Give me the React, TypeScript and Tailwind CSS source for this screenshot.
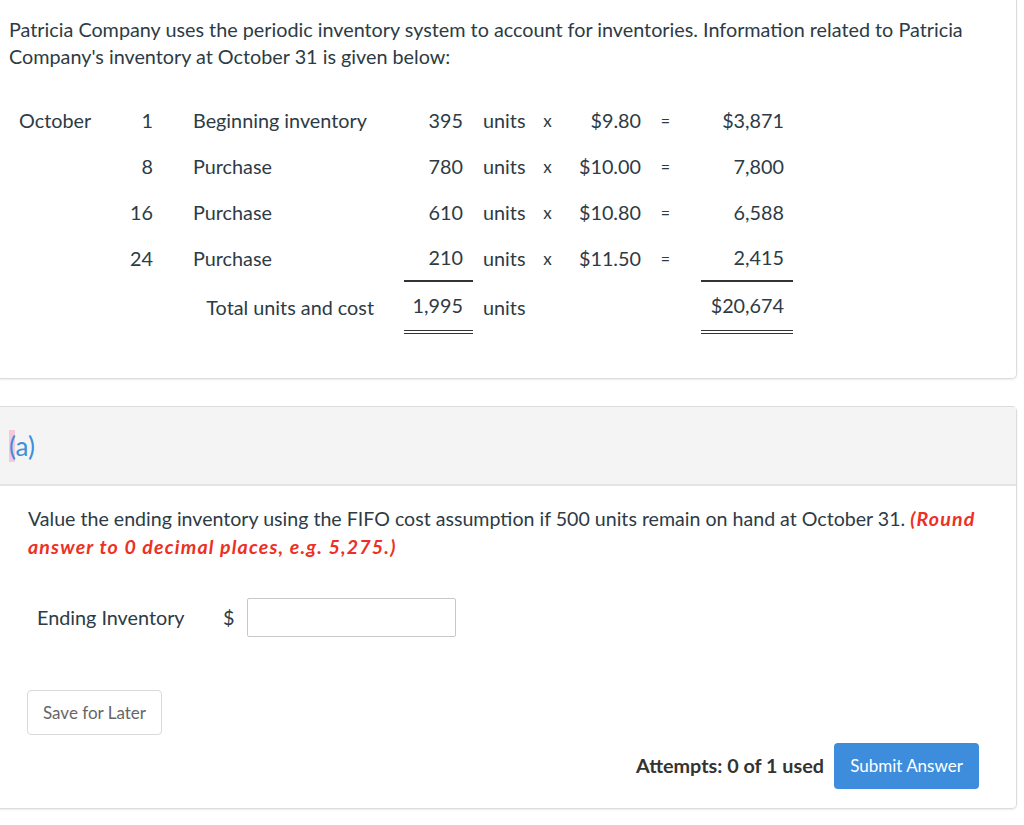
import React from "react";

type Row = {
  month?: string;
  day: string;
  desc: string;
  qty: string;
  price: string;
  amount: string;
  underline?: boolean;
};

const rows: Row[] = [
  { month: "October", day: "1", desc: "Beginning inventory", qty: "395", price: "$9.80", amount: "$3,871" },
  { day: "8", desc: "Purchase", qty: "780", price: "$10.00", amount: "7,800" },
  { day: "16", desc: "Purchase", qty: "610", price: "$10.80", amount: "6,588" },
  { day: "24", desc: "Purchase", qty: "210", price: "$11.50", amount: "2,415", underline: true },
];

const InventoryTable = () => (
  <div className="flex flex-col mt-[28px] text-[19.8px] text-[#2d3b45]">
    {rows.map((r) => (
      <div key={r.day} className="flex h-[46px]">
        <div className="w-[101px] pl-[10px] flex items-center">{r.month}</div>
        <div className="w-[53px] pr-[10px] flex items-center justify-end">{r.day}</div>
        <div className="w-[241px] pl-[30px] flex items-center">{r.desc}</div>
        <div
          className={
            "w-[69px] pr-[10px] flex items-center justify-end " +
            (r.underline ? "border-b-2 border-[#333]" : "")
          }
        >
          {r.qty}
        </div>
        <div className="w-[57px] pl-[10px] flex items-center">units</div>
        <div className="w-[35px] flex items-center justify-center text-[17px]">x</div>
        <div className="w-[86px] pr-[10px] flex items-center justify-end">{r.price}</div>
        <div className="w-[29px] flex items-center justify-center text-[16px]">=</div>
        <div className="w-[21px]" />
        <div
          className={
            "w-[92px] pr-[9px] flex items-center justify-end " +
            (r.underline ? "border-b-2 border-[#333]" : "")
          }
        >
          {r.amount}
        </div>
      </div>
    ))}
    <div className="flex h-[52px]">
      <div className="w-[395px] pr-[30px] flex items-center justify-end">Total units and cost</div>
      <div className="w-[69px] pr-[10px] flex items-center justify-end border-b-[4px] border-double border-[#333]">
        1,995
      </div>
      <div className="w-[57px] pl-[10px] flex items-center">units</div>
      <div className="w-[171px]" />
      <div className="w-[92px] pr-[9px] flex items-center justify-end border-b-[4px] border-double border-[#333]">
        $20,674
      </div>
    </div>
  </div>
);

export default function App() {
  return (
    <div className="w-[1024px] h-[825px] bg-white overflow-hidden font-['Lato','Liberation_Sans',sans-serif] text-[#2d3b45]">
      <div className="w-[1017px] h-[379px] border-r border-b border-[#dcdcdc] rounded-br-[5px] shadow-[0_1px_2px_rgba(0,0,0,0.08)] pt-[16px] pl-[9px]">
        <p className="text-[19.8px] leading-[27px] whitespace-nowrap">
          Patricia Company uses the periodic inventory system to account for inventories. Information related to
          Patricia
          <br />
          Company's inventory at October 31 is given below:
        </p>
        <InventoryTable />
      </div>

      <div className="mt-[27px] w-[1017px] h-[403px] border-t border-r border-b border-[#dcdcdc] rounded-tr-[5px] rounded-br-[5px] shadow-[0_1px_2px_rgba(0,0,0,0.08)] flex flex-col">
        <div className="h-[79px] bg-[#f4f4f4] border-b-2 border-[#e3e3e3] pl-[9px] flex items-center">
          <span className="text-[26px] text-[#3d8fdb] leading-none">
            <span className="bg-[#f6c8dc]">(</span>a)
          </span>
        </div>
        <div className="pl-[28px] pr-[37px] pt-[19px]">
          <p className="text-[19.6px] leading-[28px] whitespace-nowrap">
            Value the ending inventory using the FIFO cost assumption if 500 units remain on hand at October 31.{" "}
            <span className="text-[#ee3024] font-bold italic tracking-[1.15px]">
              (Round
              <br />
              answer to 0 decimal places, e.g. 5,275.)
            </span>
          </p>
          <div className="flex items-center mt-[37px] pl-[9px]">
            <span className="text-[19.8px] w-[186px]">Ending Inventory</span>
            <span className="text-[19.8px] w-[24px]">$</span>
            <input
              type="text"
              className="w-[209px] h-[39px] border border-[#c8c8c8] rounded-[2px] bg-white outline-none px-2"
            />
          </div>
          <div className="mt-[53px] -ml-[1px]">
            <button className="w-[135px] h-[45px] border border-[#d9d9d9] rounded-[4px] text-[17px] text-[#666] bg-white">
              Save for Later
            </button>
          </div>
          <div className="flex items-center justify-end mt-[8px]">
            <span className="text-[19.8px] font-bold text-[#333] mr-[10px]">Attempts: 0 of 1 used</span>
            <button className="w-[145px] h-[46px] rounded-[4px] bg-[#3e8ddd] text-white text-[17px]">
              Submit Answer
            </button>
          </div>
        </div>
      </div>
    </div>
  );
}
